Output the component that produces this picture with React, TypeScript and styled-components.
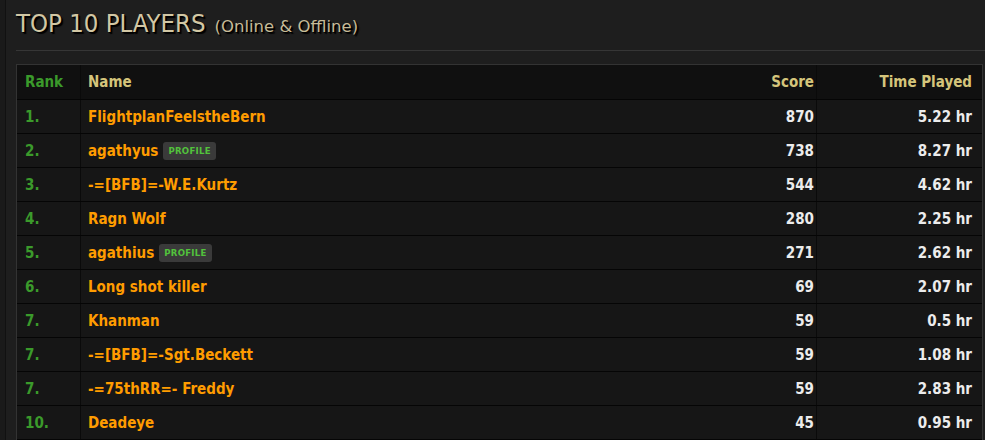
import React from "react";
import styled, { createGlobalStyle } from "styled-components";

const Global = createGlobalStyle`
  html, body { margin: 0; padding: 0; background: #1a1a1a; }
  body { font-family: "DejaVu Sans Condensed", "DejaVu Sans", sans-serif; }
  * { box-sizing: border-box; }
`;

const Frame = styled.div`
  margin-left: 5px;
  border-left: 1px solid #111;
  background: #1e1e1e;
  padding: 0 2px 0 10px;
  height: 440px;
  overflow: hidden;
`;

const TitleBar = styled.div`
  padding: 8px 0 12px;
  border-bottom: 1px solid #363636;
  margin-right: -2px;
`;

const Title = styled.h1`
  margin: 0;
  height: 30px;
  display: flex;
  align-items: baseline;
  font-family: "DejaVu Sans Condensed", "DejaVu Sans", sans-serif;
  font-weight: normal;
  font-size: 25.5px;
  line-height: 30px;
  color: #d2c7a4;
  text-shadow: 2px 2px 1px #000, 1px 1px 0 #000;
  white-space: nowrap;
`;

const Sub = styled.span`
  font-family: "DejaVu Sans", sans-serif;
  font-size: 16.5px;
  line-height: 1;
  color: #c6bb98;
  margin-left: 9px;
`;

const Table = styled.div`
  margin-top: 13px;
  border: 1px solid #333;
  background: #161616;
`;

const Row = styled.div<{ $head?: boolean }>`
  display: grid;
  grid-template-columns: 64px 1fr 130px 165px;
  height: ${(p) => (p.$head ? 35 : 34)}px;
  border-bottom: 1px solid #050505;
  background: ${(p) => (p.$head ? "#101010" : "#161616")};
  font-size: 15px;
  font-weight: bold;
`;

const Cell = styled.div<{ $align?: "left" | "right"; $sep?: boolean; $pl?: number; $pr?: number }>`
  display: flex;
  align-items: center;
  justify-content: ${(p) => (p.$align === "right" ? "flex-end" : "flex-start")};
  padding-left: ${(p) => p.$pl ?? 0}px;
  padding-right: ${(p) => p.$pr ?? 0}px;
  border-right: ${(p) => (p.$sep ? "1px solid #0a0a0a" : "none")};
  white-space: nowrap;
`;

const RankCell = styled(Cell)`
  color: #3b9a2b;
`;

const HeadCell = styled(Cell)`
  color: #d5c57b;
`;

const NameCell = styled(Cell)`
  color: #ff9c00;
`;

const NumCell = styled(Cell)`
  color: #ececec;
`;

const Badge = styled.span`
  display: inline-flex;
  align-items: center;
  height: 18px;
  margin-left: 5px;
  padding: 0 5px;
  background: #3a3a3a;
  border-radius: 3px;
  color: #52c23c;
  font-size: 9.5px;
  font-weight: bold;
  letter-spacing: 0.3px;
`;

const players = [
  { rank: "1.", name: "FlightplanFeelstheBern", profile: false, score: 870, time: "5.22 hr" },
  { rank: "2.", name: "agathyus", profile: true, score: 738, time: "8.27 hr" },
  { rank: "3.", name: "-=[BFB]=-W.E.Kurtz", profile: false, score: 544, time: "4.62 hr" },
  { rank: "4.", name: "Ragn Wolf", profile: false, score: 280, time: "2.25 hr" },
  { rank: "5.", name: "agathius", profile: true, score: 271, time: "2.62 hr" },
  { rank: "6.", name: "Long shot killer", profile: false, score: 69, time: "2.07 hr" },
  { rank: "7.", name: "Khanman", profile: false, score: 59, time: "0.5 hr" },
  { rank: "7.", name: "-=[BFB]=-Sgt.Beckett", profile: false, score: 59, time: "1.08 hr" },
  { rank: "7.", name: "-=75thRR=- Freddy", profile: false, score: 59, time: "2.83 hr" },
  { rank: "10.", name: "Deadeye", profile: false, score: 45, time: "0.95 hr" },
];

export default function App() {
  return (
    <>
      <Global />
      <Frame>
        <TitleBar>
          <Title>
            TOP 10 PLAYERS<Sub>(Online &amp; Offline)</Sub>
          </Title>
        </TitleBar>
        <Table>
          <Row $head>
            <RankCell $pl={8} $sep>Rank</RankCell>
            <HeadCell $pl={7}>Name</HeadCell>
            <HeadCell $align="right" $pr={2} $sep>Score</HeadCell>
            <HeadCell $align="right" $pr={10}>Time Played</HeadCell>
          </Row>
          {players.map((p, i) => (
            <Row key={i}>
              <RankCell $pl={8} $sep>{p.rank}</RankCell>
              <NameCell $pl={7}>
                {p.name}
                {p.profile && <Badge>PROFILE</Badge>}
              </NameCell>
              <NumCell $align="right" $pr={2} $sep>{p.score}</NumCell>
              <NumCell $align="right" $pr={10}>{p.time}</NumCell>
            </Row>
          ))}
        </Table>
      </Frame>
    </>
  );
}
